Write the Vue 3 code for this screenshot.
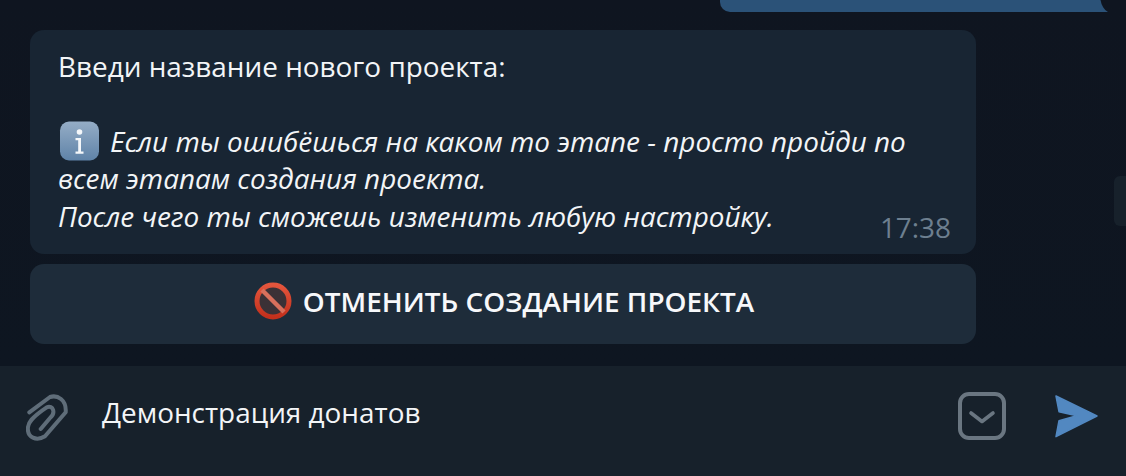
<script setup>
const lines = [
  'всем этапам создания проекта.',
  'После чего ты сможешь изменить любую настройку.'
]
</script>

<template>
  <div class="page">
    <main class="chat">
      <div class="out-row">
        <div class="out"></div>
        <svg class="tail" viewBox="0 0 8 12"><path d="M0 0H.5C1.500 5.500 4 9.800 8 12H0z" fill="#2b5278" /></svg>
      </div>
      <section class="bubble">
        <p class="line">Введи название нового проекта:</p>
        <p class="line"></p>
        <p class="line em info">
          <svg class="emoji-i" viewBox="0 0 40 40">
            <defs>
              <linearGradient id="ig" x1="0" y1="0" x2="0" y2="1">
                <stop offset="0" stop-color="#95adc6" />
                <stop offset="1" stop-color="#5f83a8" />
              </linearGradient>
            </defs>
            <rect x="0.5" y="0.5" width="39" height="39" rx="9" fill="url(#ig)" />
            <circle cx="20" cy="11" r="2.800" fill="#f4f7fa" />
            <path d="M16 17h5.500v13.500h2.500v2.300h-8v-2.300h2.700V19.300H16z" fill="#f4f7fa" />
          </svg>
          <span>Если ты ошибёшься на каком то этапе - просто пройди по</span>
        </p>
        <p v-for="l in lines" :key="l" class="line em">{{ l }}</p>
        <span class="time">17:38</span>
      </section>
      <button class="action">
        <svg class="emoji-no" viewBox="0 0 38 38">
          <defs>
            <linearGradient id="ng" x1="0" y1="0" x2="0" y2="1">
              <stop offset="0" stop-color="#e4553c" />
              <stop offset="1" stop-color="#c2301c" />
            </linearGradient>
          </defs>
          <circle cx="19" cy="19" r="16" fill="#3b3136" stroke="url(#ng)" stroke-width="5" />
          <path d="M8 8l22 22" stroke="#d9705c" stroke-width="4.500" />
        </svg>
        <span>ОТМЕНИТЬ СОЗДАНИЕ ПРОЕКТА</span>
      </button>
      <div class="scroll-tab"></div>
    </main>
    <footer class="composer">
      <svg class="clip" viewBox="0 0 46 50" fill="none">
        <path d="M3.300 19.300 L24 4 C31.300 1.700 40.700 6.700 39.700 19.300 L19 43.300 C10.700 48.300 .7 45 2 34 C2.500 30 4.700 25 20.700 14.300 C27.300 11.700 30 20 24 25 L14.700 36"
          stroke="#5f6d79" stroke-width="4" stroke-linecap="round" stroke-linejoin="round" />
      </svg>
      <span class="draft">Демонстрация донатов</span>
      <svg class="kb" viewBox="0 0 48 48" fill="none">
        <rect x="2" y="2" width="44" height="44" rx="9" stroke="#6a7681" stroke-width="4" />
        <path d="M13 21l11 8.500 11-8.500" stroke="#6a7681" stroke-width="3.600" stroke-linecap="round" stroke-linejoin="round" />
      </svg>
      <svg class="send" viewBox="0 0 44 44">
        <path d="M1 2 L42 22 L1 42.700 L4 26.700 L21.700 21.700 L4 17.700 Z" fill="#5288c1" stroke="#5288c1" stroke-width="1.500" stroke-linejoin="round" />
      </svg>
    </footer>
  </div>
</template>

<style>
body { margin: 0; background: #0e1621; }
</style>

<style scoped>
.page {
  width: 1126px;
  height: 476px;
  display: flex;
  flex-direction: column;
  background: #0e1621;
  font-family: "Open Sans", "Noto Sans", sans-serif;
  color: #f3f5f7;
  overflow: hidden;
}
.chat {
  position: relative;
  height: 366px;
  flex: none;
  background: linear-gradient(180deg, #0f1520, #0e1621);
}
.out-row {
  display: flex;
  justify-content: flex-end;
  padding-right: 18px;
}
.out {
  width: 380px;
  height: 12px;
  background: #2b5278;
  border-bottom-left-radius: 10px;
}
.tail {
  width: 8px;
  height: 12px;
  flex: none;
}
.bubble {
  position: relative;
  box-sizing: border-box;
  width: 946px;
  height: 224px;
  margin: 18px 0 0 30px;
  padding: 17.500px 28px 0;
  background: #182533;
  border-radius: 14px;
}
.line {
  margin: 0;
  height: 37.500px;
  line-height: 37.500px;
  font-size: 27.900px;
  white-space: nowrap;
}
.em { font-style: italic; }
.info {
  display: flex;
  align-items: center;
  gap: 10px;
}
.emoji-i {
  width: 41px;
  height: 40px;
  margin-left: 1px;
  flex: none;
}
.time {
  position: absolute;
  right: 25px;
  bottom: 8px;
  font-size: 27.900px;
  line-height: 37px;
  color: #6d7f8f;
}
.action {
  display: flex;
  align-items: center;
  justify-content: center;
  gap: 11px;
  box-sizing: border-box;
  width: 946px;
  height: 80px;
  margin: 10px 0 0 30px;
  padding: 0 0 6px 2px;
  border: 0;
  border-radius: 14px;
  background: #1e2c3a;
  color: #f7f8fa;
  font-family: inherit;
  font-size: 27.900px;
  font-weight: 600;
}
.emoji-no {
  width: 38px;
  height: 38px;
  flex: none;
}
.scroll-tab {
  position: absolute;
  right: 0;
  top: 176px;
  width: 12px;
  height: 50px;
  background: #17212b;
  border-radius: 6px 0 0 6px;
}
.composer {
  flex: 1;
  display: flex;
  align-items: center;
  padding: 0 27px 10px 26px;
  background: #17212b;
}
.clip {
  width: 46px;
  height: 50px;
  margin-top: 4px;
  flex: none;
}
.draft {
  flex: 1;
  margin: 0 0 8px 30px;
  font-size: 27.900px;
  color: #f3f5f7;
}
.kb {
  width: 48px;
  height: 48px;
  flex: none;
}
.send {
  width: 44px;
  height: 44px;
  margin-left: 49px;
  flex: none;
}
</style>
